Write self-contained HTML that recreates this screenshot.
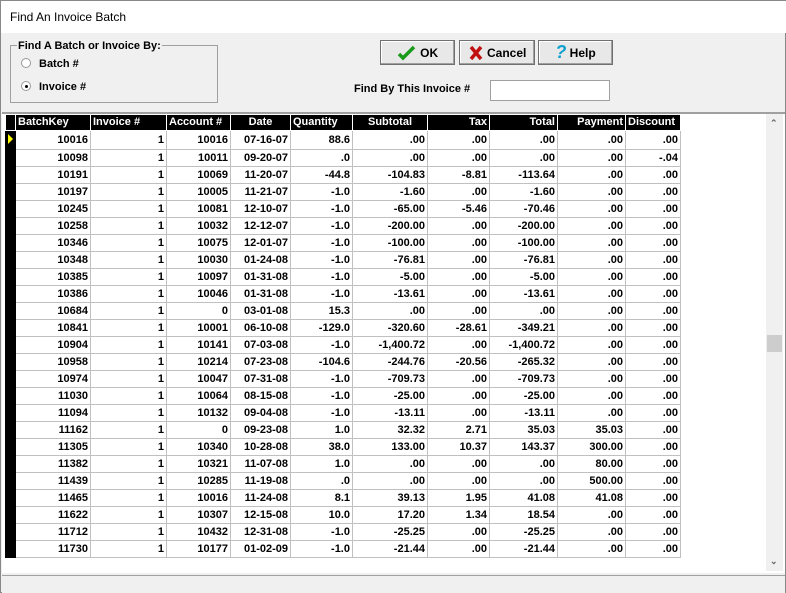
<!DOCTYPE html>
<html><head><style>
*{margin:0;padding:0;box-sizing:border-box}
body{width:786px;height:593px;background:#f0f0f0;font-family:"Liberation Sans",Arial,sans-serif;font-size:11px;font-weight:bold;position:relative;overflow:hidden;border:1px solid #888}
.title{position:absolute;left:0;top:0;width:786px;height:32px;background:#fff;font-weight:normal;font-size:12px;padding:9px 0 0 9px;color:#000}
.grp{position:absolute;left:9px;top:44px;width:208px;height:58px;border:1px solid #a0a0a0}
.grp .lg{position:absolute;left:6px;top:-6px;background:#f0f0f0;padding:0 1px}
.rad{position:absolute;left:10px;font-weight:bold}
.rad i{display:inline-block;width:10px;height:10px;border:1px solid #999;border-radius:50%;background:#fff;vertical-align:-1px;margin-right:8px;position:relative}
.rad i.on:after{content:"";position:absolute;left:3px;top:3px;width:3px;height:3px;background:#000;border-radius:50%}
.btn{position:absolute;top:39px;height:25px;border:1px solid #707070;background:#e8e8e8;box-shadow:inset -1px -1px #a0a0a0,inset 1px 1px #fff;display:flex;align-items:center;justify-content:center;font-size:12px}
.grid{position:absolute;left:1px;top:111px;width:783px;height:461px;background:#fff;border-top:2px solid #a0a0a0}
table{position:absolute;left:3px;top:1px;border-collapse:collapse;table-layout:fixed;width:675px}
td,th{height:17px;border:1px solid #c0c0c0;padding:0 2px;text-align:right;white-space:nowrap;overflow:hidden;font-size:11px}
th{background:#000;color:#fff;border-color:#fff;border-top:0;height:15px}
td.ind{background:#000;border-color:#000;padding:0}
th.l{text-align:left}
.sb{position:absolute;left:765px;top:113px;width:17px;height:457px;background:#f0f0f0}
.status{position:absolute;left:1px;top:574px;width:783px;height:18px;border-top:1px solid #a0a0a0;background:#f0f0f0}
</style></head><body>
<div class="title">Find An Invoice Batch</div>
<div class="grp"><span class="lg">Find A Batch or Invoice By:</span>
<div class="rad" style="top:12px"><i></i>Batch #</div>
<div class="rad" style="top:35px"><i class="on"></i>Invoice #</div></div>
<div class="btn" style="left:379px;width:75px"><svg width="20" height="16" viewBox="0 0 20 16"><path d="M2 9l4 4 11-11" stroke="#1a9a1a" stroke-width="3.5" fill="none"/></svg>&nbsp;OK</div>
<div class="btn" style="left:458px;width:76px"><svg width="16" height="16"><path d="M3 2l10 12M13 2L3 14" stroke="#c01010" stroke-width="3.5"/></svg>&nbsp;Cancel</div>
<div class="btn" style="left:537px;width:75px"><span style="color:#10a0d0;font-size:18px;font-style:italic">?</span>&nbsp;Help</div>
<div style="position:absolute;left:353px;top:82px">Find By This Invoice #</div>
<div style="position:absolute;left:489px;top:79px;width:120px;height:21px;background:#fff;border:1px solid #a0a0a0"></div>
<div class="grid">
<table>
<colgroup><col style="width:10px"><col style="width:75px"><col style="width:76px"><col style="width:64px"><col style="width:60px"><col style="width:62px"><col style="width:75px"><col style="width:62px"><col style="width:68px"><col style="width:68px"><col style="width:55px"></colgroup>
<tr><th style="background:#000"></th><th class="l">BatchKey</th><th class="l">Invoice #</th><th class="l">Account #</th><th style="text-align:center">Date</th><th class="l">Quantity</th><th style="text-align:center">Subtotal</th><th>Tax</th><th>Total</th><th>Payment</th><th class="l">Discount</th></tr>
<tr><td class="ind"><svg width="10" height="15"><path d="M2 3l5 5-5 5z" fill="#ff0"/></svg></td><td>10016</td><td>1</td><td>10016</td><td>07-16-07</td><td>88.6</td><td>.00</td><td>.00</td><td>.00</td><td>.00</td><td>.00</td></tr>
<tr><td class="ind"></td><td>10098</td><td>1</td><td>10011</td><td>09-20-07</td><td>.0</td><td>.00</td><td>.00</td><td>.00</td><td>.00</td><td>-.04</td></tr>
<tr><td class="ind"></td><td>10191</td><td>1</td><td>10069</td><td>11-20-07</td><td>-44.8</td><td>-104.83</td><td>-8.81</td><td>-113.64</td><td>.00</td><td>.00</td></tr>
<tr><td class="ind"></td><td>10197</td><td>1</td><td>10005</td><td>11-21-07</td><td>-1.0</td><td>-1.60</td><td>.00</td><td>-1.60</td><td>.00</td><td>.00</td></tr>
<tr><td class="ind"></td><td>10245</td><td>1</td><td>10081</td><td>12-10-07</td><td>-1.0</td><td>-65.00</td><td>-5.46</td><td>-70.46</td><td>.00</td><td>.00</td></tr>
<tr><td class="ind"></td><td>10258</td><td>1</td><td>10032</td><td>12-12-07</td><td>-1.0</td><td>-200.00</td><td>.00</td><td>-200.00</td><td>.00</td><td>.00</td></tr>
<tr><td class="ind"></td><td>10346</td><td>1</td><td>10075</td><td>12-01-07</td><td>-1.0</td><td>-100.00</td><td>.00</td><td>-100.00</td><td>.00</td><td>.00</td></tr>
<tr><td class="ind"></td><td>10348</td><td>1</td><td>10030</td><td>01-24-08</td><td>-1.0</td><td>-76.81</td><td>.00</td><td>-76.81</td><td>.00</td><td>.00</td></tr>
<tr><td class="ind"></td><td>10385</td><td>1</td><td>10097</td><td>01-31-08</td><td>-1.0</td><td>-5.00</td><td>.00</td><td>-5.00</td><td>.00</td><td>.00</td></tr>
<tr><td class="ind"></td><td>10386</td><td>1</td><td>10046</td><td>01-31-08</td><td>-1.0</td><td>-13.61</td><td>.00</td><td>-13.61</td><td>.00</td><td>.00</td></tr>
<tr><td class="ind"></td><td>10684</td><td>1</td><td>0</td><td>03-01-08</td><td>15.3</td><td>.00</td><td>.00</td><td>.00</td><td>.00</td><td>.00</td></tr>
<tr><td class="ind"></td><td>10841</td><td>1</td><td>10001</td><td>06-10-08</td><td>-129.0</td><td>-320.60</td><td>-28.61</td><td>-349.21</td><td>.00</td><td>.00</td></tr>
<tr><td class="ind"></td><td>10904</td><td>1</td><td>10141</td><td>07-03-08</td><td>-1.0</td><td>-1,400.72</td><td>.00</td><td>-1,400.72</td><td>.00</td><td>.00</td></tr>
<tr><td class="ind"></td><td>10958</td><td>1</td><td>10214</td><td>07-23-08</td><td>-104.6</td><td>-244.76</td><td>-20.56</td><td>-265.32</td><td>.00</td><td>.00</td></tr>
<tr><td class="ind"></td><td>10974</td><td>1</td><td>10047</td><td>07-31-08</td><td>-1.0</td><td>-709.73</td><td>.00</td><td>-709.73</td><td>.00</td><td>.00</td></tr>
<tr><td class="ind"></td><td>11030</td><td>1</td><td>10064</td><td>08-15-08</td><td>-1.0</td><td>-25.00</td><td>.00</td><td>-25.00</td><td>.00</td><td>.00</td></tr>
<tr><td class="ind"></td><td>11094</td><td>1</td><td>10132</td><td>09-04-08</td><td>-1.0</td><td>-13.11</td><td>.00</td><td>-13.11</td><td>.00</td><td>.00</td></tr>
<tr><td class="ind"></td><td>11162</td><td>1</td><td>0</td><td>09-23-08</td><td>1.0</td><td>32.32</td><td>2.71</td><td>35.03</td><td>35.03</td><td>.00</td></tr>
<tr><td class="ind"></td><td>11305</td><td>1</td><td>10340</td><td>10-28-08</td><td>38.0</td><td>133.00</td><td>10.37</td><td>143.37</td><td>300.00</td><td>.00</td></tr>
<tr><td class="ind"></td><td>11382</td><td>1</td><td>10321</td><td>11-07-08</td><td>1.0</td><td>.00</td><td>.00</td><td>.00</td><td>80.00</td><td>.00</td></tr>
<tr><td class="ind"></td><td>11439</td><td>1</td><td>10285</td><td>11-19-08</td><td>.0</td><td>.00</td><td>.00</td><td>.00</td><td>500.00</td><td>.00</td></tr>
<tr><td class="ind"></td><td>11465</td><td>1</td><td>10016</td><td>11-24-08</td><td>8.1</td><td>39.13</td><td>1.95</td><td>41.08</td><td>41.08</td><td>.00</td></tr>
<tr><td class="ind"></td><td>11622</td><td>1</td><td>10307</td><td>12-15-08</td><td>10.0</td><td>17.20</td><td>1.34</td><td>18.54</td><td>.00</td><td>.00</td></tr>
<tr><td class="ind"></td><td>11712</td><td>1</td><td>10432</td><td>12-31-08</td><td>-1.0</td><td>-25.25</td><td>.00</td><td>-25.25</td><td>.00</td><td>.00</td></tr>
<tr><td class="ind"></td><td>11730</td><td>1</td><td>10177</td><td>01-02-09</td><td>-1.0</td><td>-21.44</td><td>.00</td><td>-21.44</td><td>.00</td><td>.00</td></tr>
</table>
</div>
<div class="sb"><div style="position:absolute;top:4px;left:4px;font-size:9px;color:#666">&#8963;</div><div style="position:absolute;top:221px;left:1px;width:15px;height:17px;background:#cdcdcd"></div><div style="position:absolute;bottom:4px;left:4px;font-size:9px;color:#666">&#8964;</div></div>
<div class="status"></div>
</body></html>
